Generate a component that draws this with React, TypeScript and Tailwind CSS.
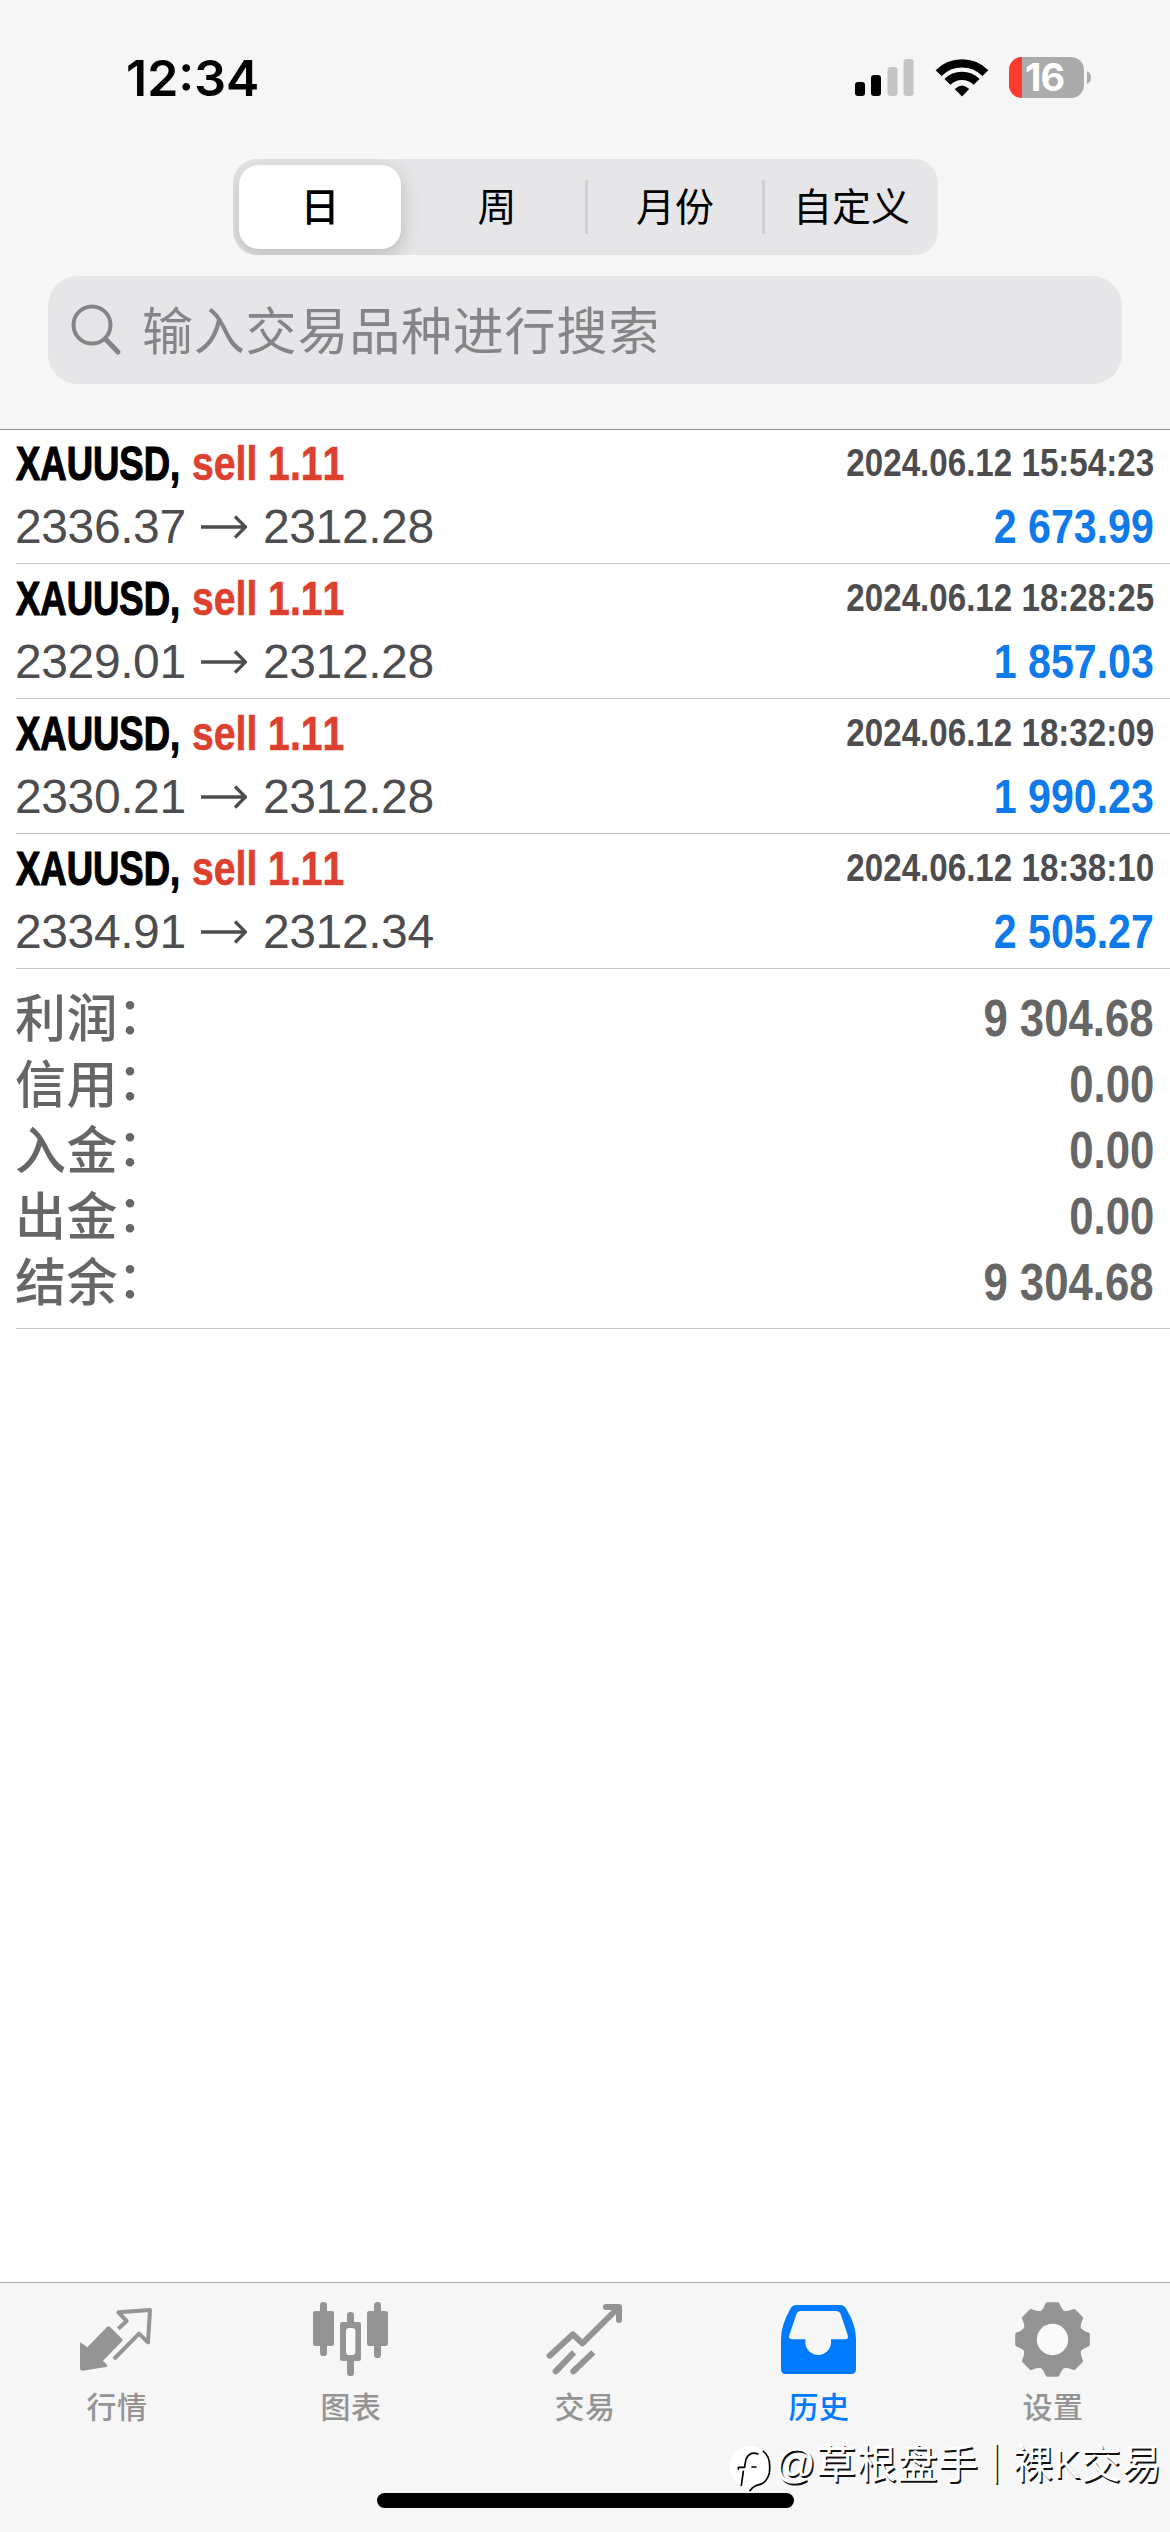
import type { ReactNode } from "react";

const deals = [
  { open: "2336.37", close: "2312.28", time: "2024.06.12 15:54:23", profit: "2 673.99" },
  { open: "2329.01", close: "2312.28", time: "2024.06.12 18:28:25", profit: "1 857.03" },
  { open: "2330.21", close: "2312.28", time: "2024.06.12 18:32:09", profit: "1 990.23" },
  { open: "2334.91", close: "2312.34", time: "2024.06.12 18:38:10", profit: "2 505.27" },
];

const totals = [
  { label: "利润", value: "9 304.68" },
  { label: "信用", value: "0.00" },
  { label: "入金", value: "0.00" },
  { label: "出金", value: "0.00" },
  { label: "结余", value: "9 304.68" },
];

function StatusBar() {
  return (
    <div className="flex h-[159px] items-start justify-between pl-[126px] pr-[79px]">
      <div className="mt-[48px] font-['Inter'] text-[50px] font-semibold leading-[60px] text-black">12:34</div>
      <div className="mt-[57px] flex">
        <svg className="mt-[2px] h-[37px] w-[59px]" viewBox="0 0 59 37">
          <rect x="0" y="23" width="10" height="14" rx="3" fill="#000" />
          <rect x="16" y="16" width="10" height="21" rx="3" fill="#000" />
          <rect x="32.5" y="8" width="10" height="29" rx="3" fill="#c4c4c4" />
          <rect x="48.5" y="0" width="10" height="37" rx="3" fill="#c4c4c4" />
        </svg>
        <svg className="ml-[21px] mt-[2px] h-[38px] w-[54px]" viewBox="0 0 54 38">
          <g fill="none" stroke="#000" strokeWidth="8.4">
            <path d="M3.6 14.1A33 33 0 0 1 50.4 14.1" />
            <path d="M12.4 22.9A20.6 20.6 0 0 1 41.6 22.9" />
          </g>
          <path d="M27 37.5L19.8 30Q27 23 34.2 30Z" fill="#000" />
        </svg>
        <div className="ml-[20px] flex h-[41px] w-[75px] rounded-[13px] bg-[#ababab]">
          <div className="h-full w-[13px] rounded-l-[13px] bg-[#ff3b30]" />
          <div className="ml-[3px] font-['Inter'] text-[38px] font-bold leading-[41px] tracking-[-1px] text-white">16</div>
        </div>
        <svg className="ml-[3px] mt-[14px] h-[13px] w-[4px]" viewBox="0 0 4 13">
          <path d="M0 0Q4 2 4 6.500Q4 11 0 13Z" fill="#ababab" />
        </svg>
      </div>
    </div>
  );
}

function PeriodSwitch() {
  return (
    <div className="ml-[233px] flex h-[96px] w-[705px] items-center overflow-hidden rounded-[24px] bg-[#e6e6e8] text-center text-[39px] leading-[60px] text-black">
      <div className="ml-[6px] flex h-[84px] w-[162px] items-center justify-center rounded-[20px] bg-white pt-[2px] font-medium shadow-[0_6px_18px_2px_rgba(0,0,0,0.17)]">日</div>
      <div className="ml-[8px] w-[176px] pt-[2px]">周</div>
      <div className="h-[54px] w-[3px] rounded bg-[#cfcfd1]" />
      <div className="w-[174px] pt-[2px]">月份</div>
      <div className="h-[54px] w-[3px] rounded bg-[#cfcfd1]" />
      <div className="w-[173px] pt-[2px]">自定义</div>
    </div>
  );
}

function SearchField() {
  return (
    <div className="ml-[48px] mt-[21px] flex h-[108px] w-[1074px] items-center rounded-[30px] bg-[#e6e6e8]">
      <svg className="ml-[22px] h-[54px] w-[54px]" viewBox="0 0 54 54" fill="none" stroke="#858588">
        <circle cx="22" cy="22" r="18.500" strokeWidth="4" />
        <path d="M35.500 36L48 49" strokeWidth="5" strokeLinecap="round" />
      </svg>
      <div className="ml-[18px] mt-[5px] text-[51px] leading-[80px] tracking-[0.8px] text-[#858588]">输入交易品种进行搜索</div>
    </div>
  );
}

function PriceArrow() {
  return (
    <svg className="ml-[15px] mr-[16px] mt-[20px] h-[24px] w-[46px]" viewBox="0 0 46 24" fill="none" stroke="#4d4d50" strokeWidth="3.300">
      <path d="M0 12H44M34 1.500L44.500 12L34 22.500" />
    </svg>
  );
}

function DealRow({ deal }: { deal: (typeof deals)[number] }) {
  return (
    <div className="flex h-[135px] justify-between border-b border-[#c4c4c6] pr-[16px] pt-[3px] text-[48px] leading-[63px]">
      <div>
        <div className="flex h-[63px] whitespace-nowrap font-bold [font-kerning:none]">
          <div className="w-[176px] origin-left scale-x-[0.76] text-black [-webkit-text-stroke:1.2px_#000]">XAUUSD,</div>
          <div className="origin-left scale-x-[0.815] text-[#dd402f] [-webkit-text-stroke:0.6px_#dd402f]">sell 1.11</div>
        </div>
        <div className="-ml-px flex tracking-[-0.4px] text-[#4d4d50]">
          <div className="w-[171px]">{deal.open}</div>
          <PriceArrow />
          <div>{deal.close}</div>
        </div>
      </div>
      <div className="flex flex-col items-end whitespace-nowrap font-bold">
        <div className="-mt-px h-[64px] origin-right scale-x-[0.85] text-[39px] text-[#4d4d50]">{deal.time}</div>
        <div className="origin-right scale-x-[0.857] text-[#0f7aea]">{deal.profit}</div>
      </div>
    </div>
  );
}

function Totals() {
  return (
    <div className="h-[360px] border-b border-[#c4c4c6] pr-[16px] pt-[17px] text-[51px] leading-[66px] text-[#666]">
      {totals.map((t) => (
        <div key={t.label} className="flex h-[66px] justify-between">
          <div className="mt-px flex font-medium">
            <span className="-ml-px tracking-[0.6px]">{t.label}</span>
            <span className="-ml-[1px] -mt-[3px]">：</span>
          </div>
          <div className="origin-right scale-x-[0.857] font-bold">{t.value}</div>
        </div>
      ))}
    </div>
  );
}

function Tab({ label, active, viewBox, children }: { label: string; active?: boolean; viewBox: string; children: ReactNode }) {
  return (
    <div className={active ? "flex w-[234px] flex-col items-center text-[#007aff]" : "flex w-[234px] flex-col items-center text-[#949494]"}>
      <svg className="mt-[14px] h-[80px] w-[80px]" viewBox={viewBox} fill="currentColor">
        {children}
      </svg>
      <div className="mt-[9px] text-[30px] font-medium leading-[44px] tracking-[0.6px]">{label}</div>
    </div>
  );
}

function Watermark() {
  return (
    <div className="absolute left-[728px] top-[2436px] flex h-[56px] items-center whitespace-nowrap text-[40px] leading-[56px] text-white [text-shadow:1.5px_1.5px_0_#111]">
      <svg className="h-[56px] w-[47px]" viewBox="0 0 141 168">
        <circle cx="66" cy="92" r="62" fill="#fff" />
        <g fill="none" stroke="#000" strokeWidth="5" strokeLinecap="round" strokeLinejoin="round">
          <path d="M90 54Q64 44 54 70Q50 86 50 94H31V100M72 93H84M46 106L40 148" />
          <path d="M106 46Q130 62 124 112Q114 146 86 148Q72 154 66 164" />
        </g>
      </svg>
      <span className="w-[41px]">@</span>
      <span className="tracking-[0.7px]">草根盘手</span>
      <span className="-mx-[3px]">｜</span>
      <span className="tracking-[0.7px]">裸K交易</span>
    </div>
  );
}

export default function App() {
  return (
    <div className="relative flex h-[2532px] w-[1170px] flex-col overflow-hidden bg-white font-['Liberation_Sans','Noto_Sans_CJK_SC',sans-serif]">
      <header className="h-[430px] border-b border-[#8e8e8e] bg-[#f6f6f6]">
        <StatusBar />
        <PeriodSwitch />
        <SearchField />
      </header>
      <main className="-mt-px flex-1 pl-[16px]">
        {deals.map((d) => (
          <DealRow key={d.time} deal={d} />
        ))}
        <Totals />
      </main>
      <nav className="h-[250px] border-t border-[#a8a8a8] bg-[#f6f6f6]">
        <div className="flex h-[210px]">
          <Tab label="行情" viewBox="231 81 240 240">
            <path d="M240 216L262 232L321 171Q325 167 330 171L366 206Q369 210 366 214L309 272L321 285Q324 289 318 291L248 302Q240 302 240 294Z" />
            <path d="M355 176L380 153L355 127L450 120L444 217L417 191L342 267" fill="none" stroke="currentColor" strokeWidth="12" strokeLinejoin="round" />
          </Tab>
          <Tab label="图表" viewBox="933 81 240 240">
            <rect x="939" y="123" width="63" height="105" rx="7" />
            <rect x="960" y="96" width="21" height="162" rx="10" />
            <rect x="1101" y="123" width="63" height="105" rx="7" />
            <rect x="1122" y="96" width="21" height="168" rx="10" />
            <rect x="1020" y="156" width="63" height="117" rx="7" />
            <rect x="1041" y="126" width="21" height="192" rx="10" />
            <rect x="1038" y="174" width="28" height="81" rx="10" fill="#fafafa" />
          </Tab>
          <Tab label="交易" viewBox="315 81 240 240">
            <g fill="none" stroke="currentColor" strokeWidth="18" strokeLinecap="round" strokeLinejoin="round">
              <path d="M329 257L399 193L427 220L536 112M498 111H537V150" />
              <path d="M347 304L356 295M400 304L409 295" />
              <path d="M350 301L402 247M403 301L460 247" strokeLinecap="butt" />
            </g>
          </Tab>
          <Tab label="历史" active viewBox="237 81 240 240">
            <path
              fillRule="evenodd"
              d="M290 105H420Q433 105 439 117Q468 165 468 207V298Q468 312 454 312H257Q243 312 243 298V207Q243 165 272 115Q278 105 290 105ZM302 123H407Q418 123 422 132L443 195Q447 208 435 208H393V217A38.500 38 0 0 1 316 217V208H277Q264 208 268 196L289 133Q293 123 302 123Z"
            />
          </Tab>
          <Tab label="设置" viewBox="939 81 240 240">
            <circle cx="1057.500" cy="208.500" r="88" />
            {[0, 45, 90, 135, 180, 225, 270, 315].map((a) => (
              <path
                key={a}
                transform={`translate(1057.5 208.5) rotate(${a})`}
                d="M-15 -106H15Q20 -90 33 -78H-33Q-20 -90 -15 -106Z"
                stroke="currentColor"
                strokeWidth="12"
                strokeLinejoin="round"
              />
            ))}
            <circle cx="1057.500" cy="208.500" r="47" fill="#fafafa" />
          </Tab>
        </div>
        <div className="mx-auto h-[15px] w-[417px] rounded-full bg-black" />
      </nav>
      <Watermark />
    </div>
  );
}
